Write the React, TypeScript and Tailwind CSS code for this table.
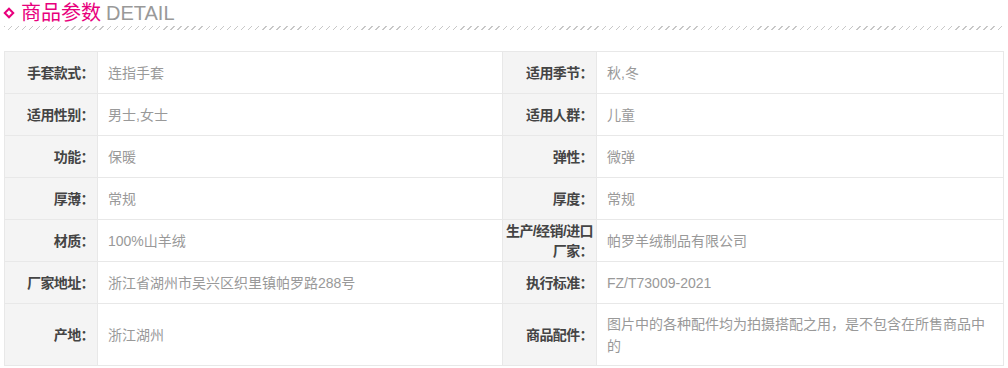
import React from "react";

type Row = { l1: React.ReactNode; v1: string; l2: React.ReactNode; v2: string; tall?: boolean };

const rows: Row[] = [
  { l1: "手套款式：", v1: "连指手套", l2: "适用季节：", v2: "秋,冬" },
  { l1: "适用性别：", v1: "男士,女士", l2: "适用人群：", v2: "儿童" },
  { l1: "功能：", v1: "保暖", l2: "弹性：", v2: "微弹" },
  { l1: "厚薄：", v1: "常规", l2: "厚度：", v2: "常规" },
  {
    l1: "材质：",
    v1: "100%山羊绒",
    l2: (
      <>
        生产/经销/进口
        <br />
        厂家：
      </>
    ),
    v2: "帕罗羊绒制品有限公司",
  },
  { l1: "厂家地址：", v1: "浙江省湖州市吴兴区织里镇帕罗路288号", l2: "执行标准：", v2: "FZ/T73009-2021" },
  { l1: "产地：", v1: "浙江湖州", l2: "商品配件：", v2: "图片中的各种配件均为拍摄搭配之用，是不包含在所售商品中的", tall: true },
];

function Label({ text, tall }: { text: React.ReactNode; tall?: boolean }) {
  return (
    <div
      className={`flex items-center justify-end whitespace-nowrap border-r border-b border-[#e8e8e8] bg-[#f4f4f4] pr-[3px] text-right text-[14px] font-bold leading-[20px] tracking-[-0.6px] text-[#444] ${
        tall ? "h-[62px]" : "h-[42px]"
      }`}
    >
      <span>{text}</span>
    </div>
  );
}

function Value({ text, tall }: { text: string; tall?: boolean }) {
  return (
    <div
      className={`flex items-center border-r border-b border-[#e8e8e8] bg-white pl-[10px] pr-[14px] text-[14px] leading-[22px] text-[#999] ${
        tall ? "h-[62px]" : "h-[42px]"
      }`}
    >
      <span>{text}</span>
    </div>
  );
}

export default function App() {
  return (
    <div
      className="w-[1008px] h-[368px] overflow-hidden bg-white"
      style={{ fontFamily: '"Liberation Sans", "Noto Sans CJK SC", sans-serif' }}
    >
      <div className="pl-[4px] w-[1004px]">
        <div className="flex items-center h-[24px] pt-[1px]">
          <span className="ml-[1px] mr-[8px] inline-block h-[8px] w-[8px] rotate-45 border-2 border-[#e8007d]" />
          <span className="text-[20px] leading-[24px] text-[#e8007d]">商品参数</span>
          <span className="ml-[5px] text-[20px] leading-[24px] text-[#999]">DETAIL</span>
        </div>
        <div className="mt-[2px] h-[4px] w-[1000px] bg-[repeating-linear-gradient(135deg,#c8c8c8_0px,#c8c8c8_1px,transparent_1px,transparent_5px)]" />
        <div className="mt-[21px] grid w-[1000px] grid-cols-[93px_405px_94px_407px] border-l border-t border-[#e8e8e8]">
          {rows.map((r, i) => (
            <React.Fragment key={i}>
              <Label text={r.l1} tall={r.tall} />
              <Value text={r.v1} tall={r.tall} />
              <Label text={r.l2} tall={r.tall} />
              <Value text={r.v2} tall={r.tall} />
            </React.Fragment>
          ))}
        </div>
      </div>
    </div>
  );
}
